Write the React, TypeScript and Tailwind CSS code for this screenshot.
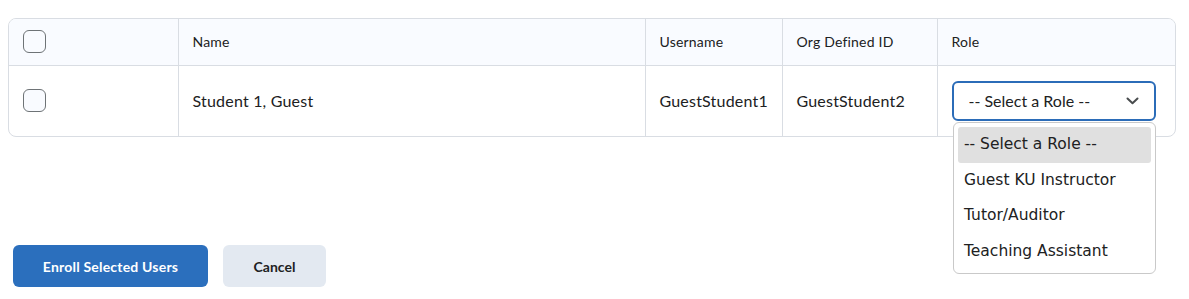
import React from 'react'

const roles = ['-- Select a Role --', 'Guest KU Instructor', 'Tutor/Auditor', 'Teaching Assistant']

function Checkbox() {
  return <div className="h-[23px] w-[23px] rounded-[6px] border border-[#6e7376] bg-[#f9fbff]" />
}

export default function App() {
  return (
    <div className="relative h-[299px] w-[1189px] bg-white pl-2 pt-[18px] font-['Lato','Noto_Sans',sans-serif] text-[#202122]">
      {/* Users table */}
      <div className="w-[1168px] overflow-hidden rounded-lg border border-[#d9dde3]">
        <table className="w-full table-fixed border-collapse">
          <colgroup>
            <col className="w-[169px]" />
            <col className="w-[467px]" />
            <col className="w-[137px]" />
            <col className="w-[155px]" />
            <col />
          </colgroup>
          <thead>
            <tr className="h-[46px] bg-[#f9fbff] text-left text-[14px] tracking-[0.2px] text-[#202122]">
              <th className="px-[14px] pb-[1px] font-normal">
                <Checkbox />
              </th>
              <th className="border-l border-[#d9dde3] px-[14px] pb-[1px] font-normal">Name</th>
              <th className="border-l border-[#d9dde3] px-[14px] pb-[1px] font-normal">Username</th>
              <th className="border-l border-[#d9dde3] px-[14px] pb-[1px] font-normal">Org Defined ID</th>
              <th className="border-l border-[#d9dde3] px-[14px] pb-[1px] font-normal">Role</th>
            </tr>
          </thead>
          <tbody>
            <tr className="h-[71px] border-t border-[#d9dde3] text-[16px] tracking-[0.2px]">
              <td className="px-[14px]">
                <Checkbox />
              </td>
              <td className="border-l border-[#d9dde3] px-[14px]">Student 1, Guest</td>
              <td className="border-l border-[#d9dde3] px-[14px]">GuestStudent1</td>
              <td className="border-l border-[#d9dde3] px-[14px]">GuestStudent2</td>
              <td className="border-l border-[#d9dde3] px-[14px]">
                <div className="flex h-[40px] w-[204px] items-center justify-between rounded-[6px] border-2 border-[#2b6cb8] pl-[15px] pr-[15px] tracking-normal">
                  <span>-- Select a Role --</span>
                  <svg width="13" height="8" viewBox="0 0 13 8" fill="none">
                    <path d="M1.5 1.5 6.5 6.2l5-4.7" stroke="#494c4e" strokeWidth="2" strokeLinecap="round" strokeLinejoin="round" />
                  </svg>
                </div>
              </td>
            </tr>
          </tbody>
        </table>
      </div>

      {/* Open role list */}
      <div className="absolute left-[953px] top-[122px] w-[203px] rounded-[6px] border border-[#c9c9c9] bg-white px-[4px] pb-[4px] pt-[4px] font-['DejaVu_Sans',sans-serif] text-[15.5px] text-[#202122]">
        {roles.map((r, i) => (
          <div
            key={r}
            className={`flex h-[35.5px] items-center rounded-[3px] px-[6px] ${i === 0 ? 'bg-[#e0e0e0]' : ''}`}
          >
            {r}
          </div>
        ))}
      </div>

      {/* Actions */}
      <div className="ml-[5px] mt-[108px] flex gap-[15px]">
        <button className="h-[42px] w-[195px] rounded-[6px] bg-[#2b6fbd] text-[14px] font-bold tracking-[0.2px] text-white">
          Enroll Selected Users
        </button>
        <button className="h-[42px] w-[103px] rounded-[6px] bg-[#e3e9f1] text-[14px] font-bold text-[#202122]">
          Cancel
        </button>
      </div>
    </div>
  )
}
